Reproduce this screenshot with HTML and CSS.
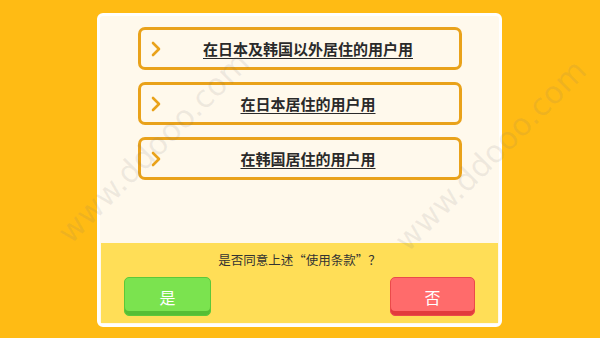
FILE: index.html
```html
<!DOCTYPE html>
<html lang="zh">
<head>
<meta charset="utf-8">
<link rel="stylesheet" href="styles.css">
</head>
<body>
<div class="stage">
  <div class="panel">
    <div class="options">
      <a class="opt"><svg class="chev" viewBox="0 0 10 16" width="10" height="16"><path d="M2 2 L8 8 L2 14" fill="none" stroke="#E9A21A" stroke-width="2.6" stroke-linecap="round" stroke-linejoin="round"/></svg><span class="label">在日本及韩国以外居住的用户用</span></a>
      <a class="opt"><svg class="chev" viewBox="0 0 10 16" width="10" height="16"><path d="M2 2 L8 8 L2 14" fill="none" stroke="#E9A21A" stroke-width="2.6" stroke-linecap="round" stroke-linejoin="round"/></svg><span class="label">在日本居住的用户用</span></a>
      <a class="opt"><svg class="chev" viewBox="0 0 10 16" width="10" height="16"><path d="M2 2 L8 8 L2 14" fill="none" stroke="#E9A21A" stroke-width="2.6" stroke-linecap="round" stroke-linejoin="round"/></svg><span class="label">在韩国居住的用户用</span></a>
    </div>
    <div class="footer">
      <p class="question">是否同意上述“使用条款”？</p>
      <div class="actions">
        <button class="btn yes">是</button>
        <button class="btn no">否</button>
      </div>
    </div>
  </div>
  <div class="wm wm1">www.ddooo.com</div>
  <div class="wm wm2">www.ddooo.com</div>
</div>
</body>
</html>
```
FILE: styles.css
```css
* { box-sizing: border-box; }
html, body { margin: 0; padding: 0; }
body {
  width: 600px;
  height: 338px;
  overflow: hidden;
  background: #FFBB14;
  font-family: "Noto Sans CJK SC", "Noto Sans", sans-serif;
}
.stage {
  position: relative;
  width: 600px;
  height: 338px;
  padding: 13px 98px 11px 97px;
  overflow: hidden;
}
.panel {
  height: 314px;
  background: #FFF9EC;
  border: 3px solid #FFFFFF;
  border-radius: 6px;
  display: flex;
  flex-direction: column;
  justify-content: space-between;
  overflow: hidden;
}
.options {
  display: flex;
  flex-direction: column;
  gap: 12px;
  padding: 11px 37px 0 38px;
}
.opt {
  position: relative;
  display: flex;
  align-items: center;
  height: 43px;
  border: 3px solid #E9A21A;
  border-radius: 7px;
  background: #FFF9EC;
  padding-left: 10px;
}
.chev { flex: none; }
.label {
  flex: 1;
  text-align: center;
  font-size: 15px;
  font-weight: 700;
  color: #2a2a2a;
  text-decoration: underline;
  text-underline-offset: 3px;
  text-decoration-thickness: 1px;
  padding-right: 4px;
  line-height: 1;
}
.footer {
  margin: 0 1px 1px 1px;
  background: #FFDE57;
  height: 80px;
  padding: 8px 23px 0 23px;
}
.question {
  margin: 0;
  text-align: center;
  font-size: 12.5px;
  color: #333;
  line-height: 17px;
}
.actions {
  display: flex;
  justify-content: space-between;
  margin-top: 9px;
}
.btn {
  font-family: inherit;
  height: 39px;
  border-radius: 5px;
  font-size: 16px;
  color: #ffffff;
  padding: 0;
  line-height: 1;
}
.yes {
  width: 87px;
  background: #7BE34F;
  border: 1px solid #5CC83A;
  box-shadow: inset 0 -4px 0 #56BE34;
}
.no {
  width: 85px;
  background: #FF6B6B;
  border: 1px solid #EA4A4A;
  box-shadow: inset 0 -4px 0 #E23C3C;
}
.wm {
  position: absolute;
  writing-mode: vertical-rl;
  font-family: "DejaVu Sans", sans-serif;
  font-size: 31px;
  line-height: 1;
  color: rgba(120, 120, 120, 0.12);
  transform: rotate(-135deg);
  transform-origin: center center;
  white-space: nowrap;
  pointer-events: none;
}
.wm1 { left: 138px; top: 20px; }
.wm2 { left: 475px; top: 28px; }
```
